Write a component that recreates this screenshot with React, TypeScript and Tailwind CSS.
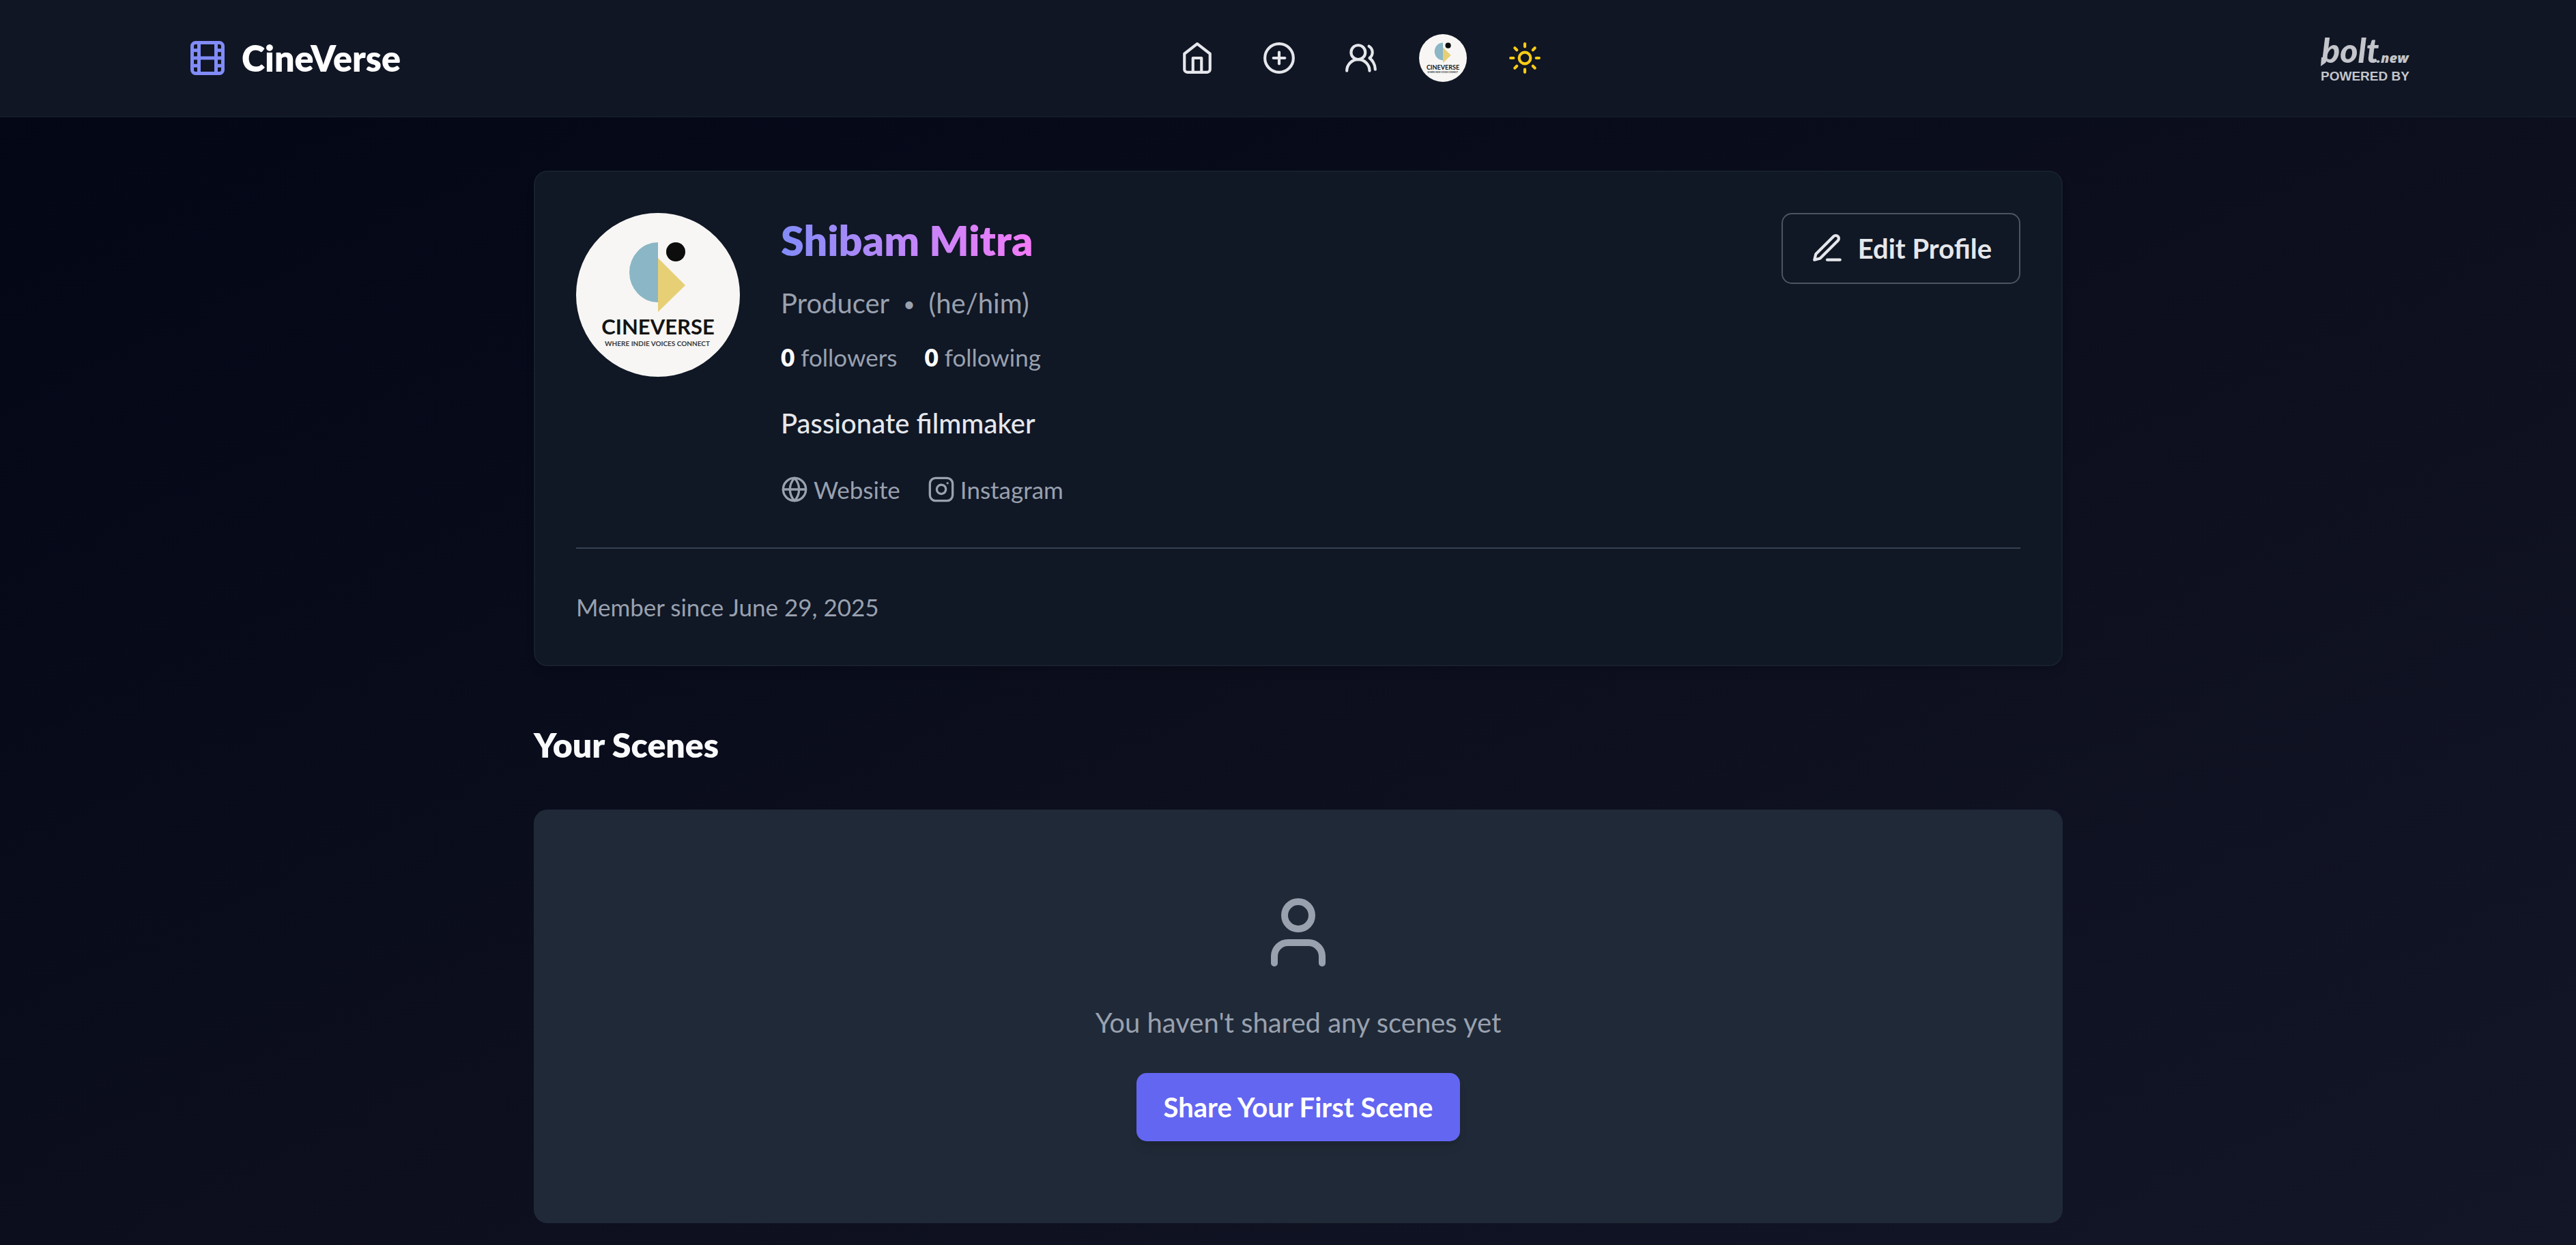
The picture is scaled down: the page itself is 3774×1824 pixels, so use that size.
import { CirclePlus, Film, Globe, Instagram, Sun, User, UsersRound } from "lucide-react";
import type { ReactNode } from "react";

function StrokeIcon({ className, children }: { className?: string; children: ReactNode }) {
  return (
    <svg
      className={className}
      viewBox="0 0 24 24"
      fill="none"
      stroke="currentColor"
      strokeWidth="2"
      strokeLinecap="round"
      strokeLinejoin="round"
      aria-hidden="true"
    >
      {children}
    </svg>
  );
}

function Avatar({ className }: { className?: string }) {
  return (
    <svg className={className} viewBox="0 0 240 240" role="img" aria-label="CineVerse avatar">
      <circle cx="120" cy="120" r="120" fill="#f7f6f4" />
      <path d="M120 43a42 44 0 0 0 0 88z" fill="#8bb6c5" />
      <path d="M120 66l40 40-40 39z" fill="#e7cf76" />
      <circle cx="146" cy="57" r="14" fill="#0d0d0d" />
      <text
        x="120"
        y="178"
        textAnchor="middle"
        fontSize="31"
        fontWeight="700"
        fill="#141414"
        className="font-['Lato',sans-serif]"
      >
        CINEVERSE
      </text>
      <text
        x="119"
        y="195"
        textAnchor="middle"
        fontSize="10"
        fontWeight="700"
        fill="#3a3a3a"
        className="font-['Lato',sans-serif]"
      >
        WHERE INDIE VOICES CONNECT
      </text>
    </svg>
  );
}

function BoltLogo({ className }: { className?: string }) {
  return (
    <svg className={className} viewBox="0 0 130 66" fill="#c3c5ca" role="img" aria-label="Powered by bolt.new">
      <text x="1" y="40" fontSize="50" fontWeight="900" fontStyle="italic" className="font-['Lato',sans-serif]">
        bolt
      </text>
      <path d="M1 32h9l-3 8-7 5z" />
      <text x="82" y="40" fontSize="20" fontWeight="800" fontStyle="italic" className="font-['Open_Sans',sans-serif]">
        .new
      </text>
      <text
        x="0"
        y="66"
        fontSize="19"
        fontWeight="700"
        className="font-['Liberation_Sans',Arial,sans-serif]"
      >
        POWERED BY
      </text>
    </svg>
  );
}

function Header() {
  return (
    <header className="border-b-2 border-[#131b28] bg-[#101624] pl-[30px]">
      <div className="mx-auto flex h-[170px] max-w-[3256px] items-center justify-between">
        <a
          href="#"
          className="flex min-w-[312px] items-center gap-5 text-[52px] leading-[70px] font-extrabold text-white"
        >
          <Film className="size-[60px] text-[#818cf8]" />
          CineVerse
        </a>
        <nav className="flex items-center gap-[70px] text-gray-200">
          <a href="#home" aria-label="Home">
            <StrokeIcon className="size-[50px]">
              <path d="m3 9 9-7 9 7v11a2 2 0 0 1-2 2H5a2 2 0 0 1-2-2z" />
              <polyline points="9 22 9 12 15 12 15 22" />
            </StrokeIcon>
          </a>
          <a href="#share" aria-label="Share a scene">
            <CirclePlus className="size-[50px]" />
          </a>
          <a href="#people" aria-label="People">
            <UsersRound className="size-[50px]" />
          </a>
          <a href="#profile" aria-label="Profile" className="-mx-[10px]">
            <Avatar className="size-[70px]" />
          </a>
          <button type="button" aria-label="Toggle theme" className="text-[#facc15]">
            <Sun className="size-[50px]" />
          </button>
        </nav>
        <a href="#bolt">
          <BoltLogo className="h-[66px] w-[130px] overflow-visible" />
        </a>
      </div>
    </header>
  );
}

function ProfileCard() {
  return (
    <section className="rounded-[20px] border-2 border-[#17202c] bg-[#101725] p-[60px] shadow-lg">
      <div className="flex items-start gap-[60px]">
        <Avatar className="size-[240px] shrink-0" />
        <div className="flex-1">
          <h1 className="w-fit bg-gradient-to-r from-[#818cf8] to-[#f47af8] bg-clip-text text-[61px] leading-[80px] font-extrabold text-transparent">
            Shibam Mitra
          </h1>
          <p className="mt-[22px] flex items-center gap-5 text-[40px] leading-[60px] text-gray-400">
            <span>Producer</span>
            <span className="text-[30px]">•</span>
            <span>(he/him)</span>
          </p>
          <div className="mt-6 flex gap-10 text-[35px] leading-[50px] text-gray-400">
            <span>
              <b className="font-extrabold text-white">0</b> followers
            </span>
            <span>
              <b className="font-extrabold text-white">0</b> following
            </span>
          </div>
          <p className="mt-[42px] text-[40px] leading-[60px] font-medium text-gray-200">Passionate filmmaker</p>
          <div className="mt-[42px] flex gap-10 text-[35px] leading-[50px] text-gray-400">
            <a href="#website" className="flex items-center gap-2">
              <Globe className="size-10" />
              Website
            </a>
            <a href="#instagram" className="flex items-center gap-2">
              <Instagram className="size-10" />
              Instagram
            </a>
          </div>
        </div>
        <button
          type="button"
          className="flex items-center gap-5 rounded-[15px] border-2 border-[#4b5563] px-10 py-5 text-[40px] leading-[60px] font-bold text-gray-200"
        >
          <StrokeIcon className="size-[50px]">
            <path d="M12 20h9" />
            <path d="M16.5 3.5a2.12 2.12 0 0 1 3 3L7 19l-4 1 1-4Z" />
          </StrokeIcon>
          Edit Profile
        </button>
      </div>
      <p className="mt-[60px] border-t-2 border-[#374151] pt-[60px] text-[35px] leading-[50px] text-gray-400">
        Member since June 29, 2025
      </p>
    </section>
  );
}

export default function App() {
  return (
    <div className="min-h-screen bg-gradient-to-br from-[#020615] via-[#0c0e1d] to-[#131627] font-['Lato',sans-serif]">
      <Header />
      <main className="pt-[78px] pb-8 pl-[30px]">
        <div className="mx-auto max-w-[2240px]">
          <ProfileCard />
          <h2 className="mt-20 text-[50px] leading-[70px] font-extrabold text-gray-50">Your Scenes</h2>
          <section className="mt-[60px] flex flex-col items-center rounded-[20px] bg-[#202937] py-[120px]">
            <User className="size-[120px] text-gray-400" />
            <p className="mt-[42px] text-[40px] leading-[60px] text-gray-400">You haven't shared any scenes yet</p>
            <button
              type="button"
              className="mt-11 rounded-[15px] bg-[#6366f1] px-10 py-5 text-[40px] leading-[60px] font-bold text-white shadow-lg"
            >
              Share Your First Scene
            </button>
          </section>
        </div>
      </main>
    </div>
  );
}
